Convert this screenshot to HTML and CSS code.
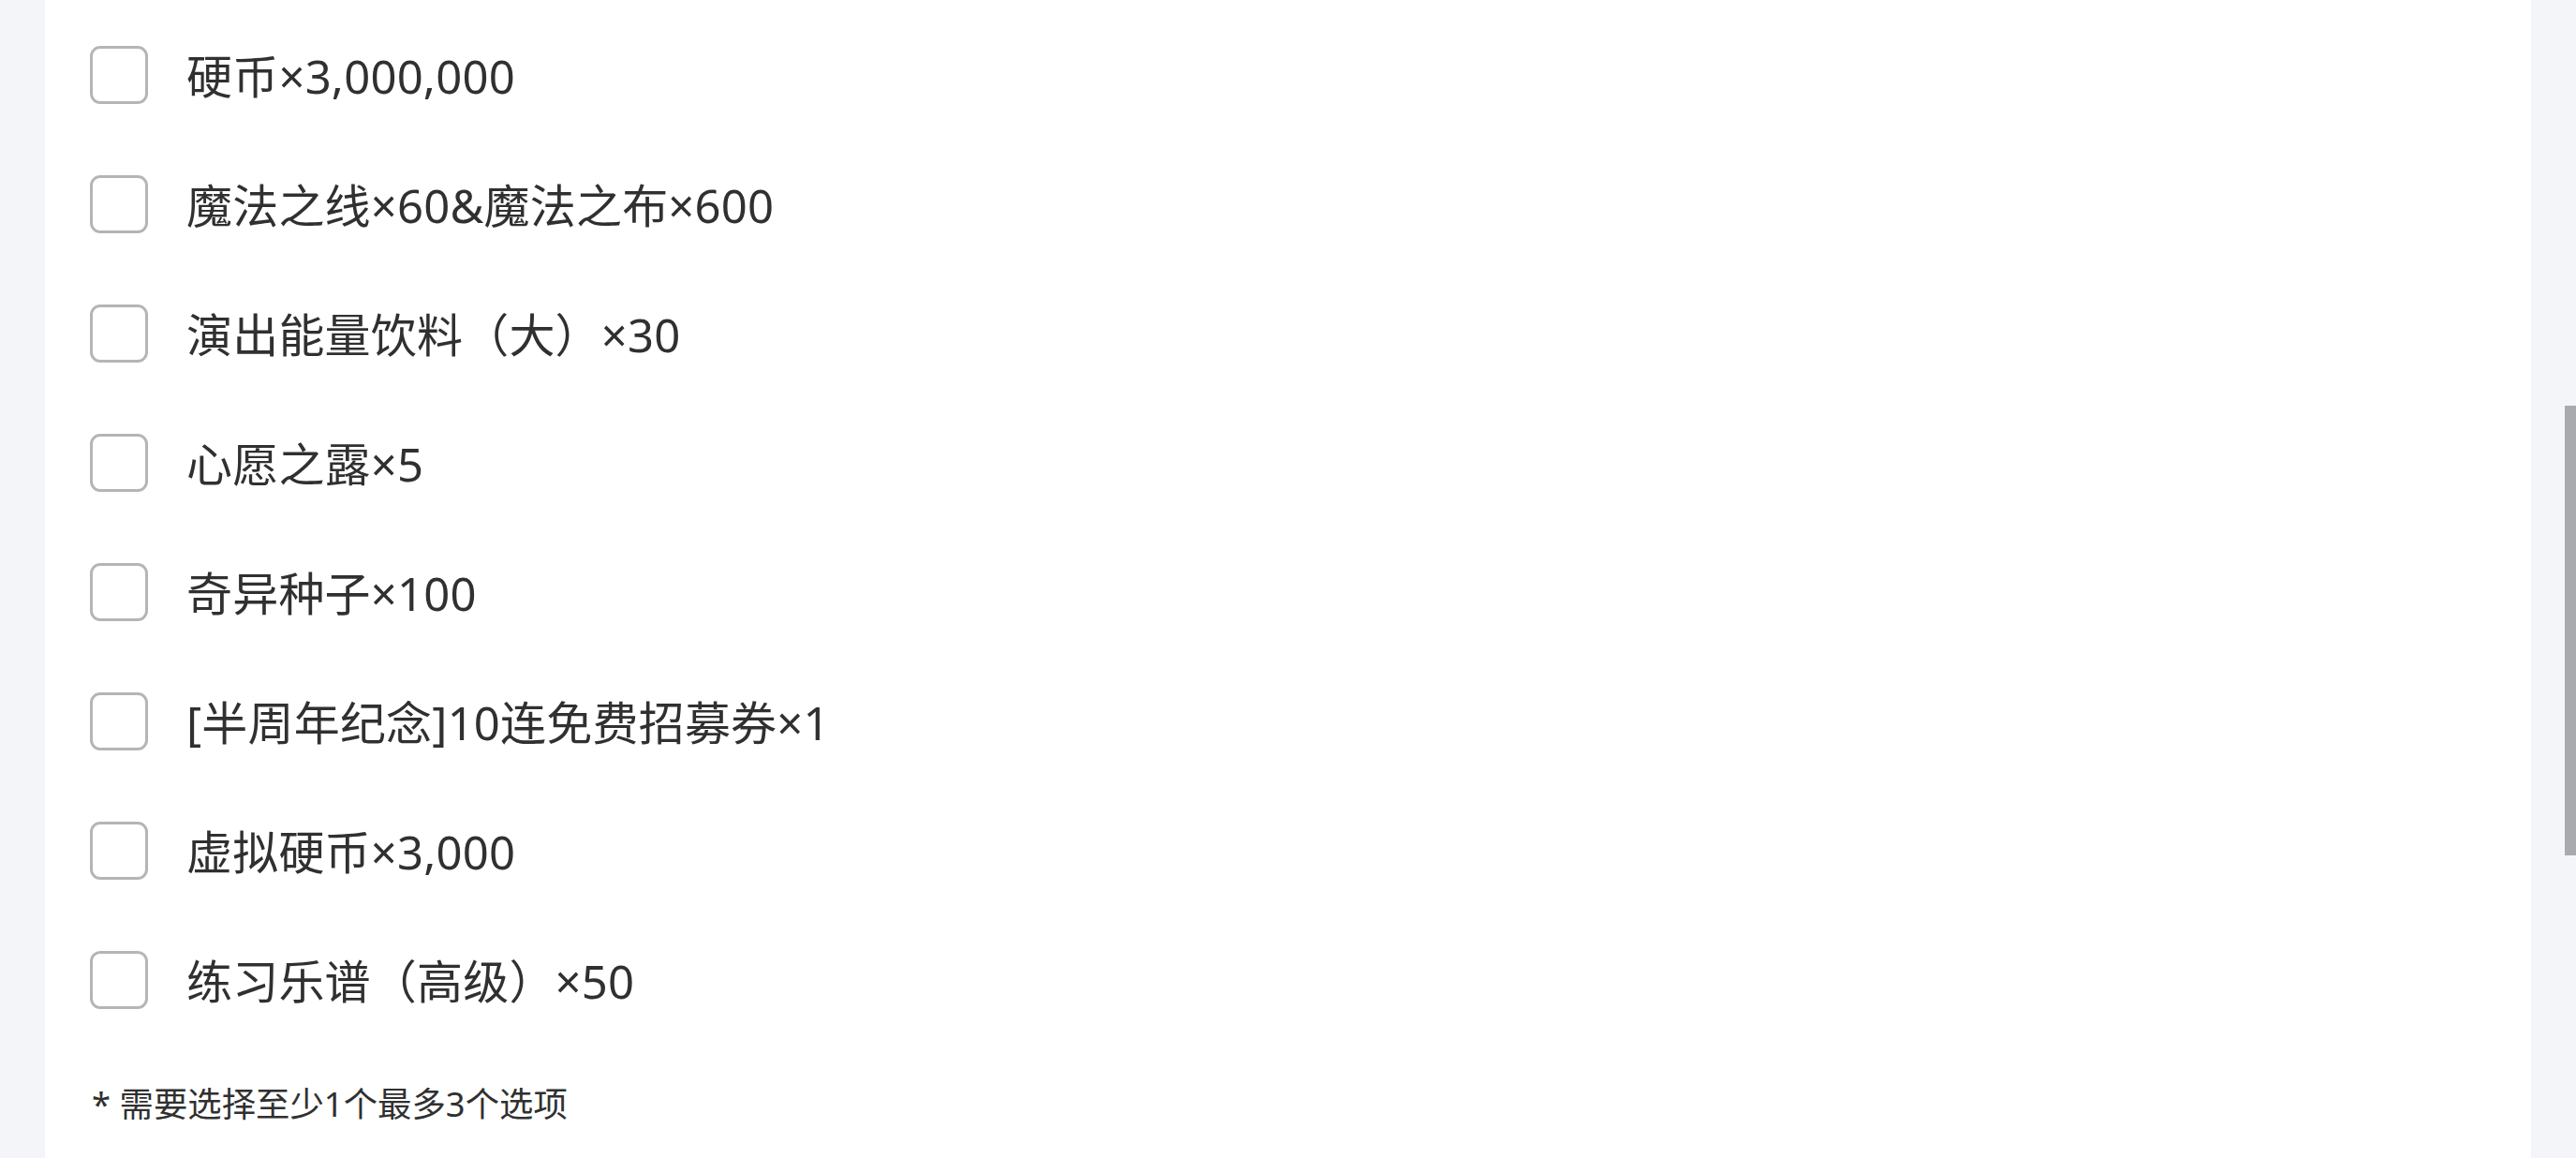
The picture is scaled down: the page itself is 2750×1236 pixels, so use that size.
FILE: index.html
```html
<!DOCTYPE html>
<html lang="zh-CN">
<head>
<meta charset="utf-8">
<title>选项</title>
<link rel="stylesheet" href="styles.css">
</head>
<body>
<div class="page">
  <div class="card">
    <ul class="options">
      <li class="option"><span class="box"></span><span class="label">硬币×3,000,000</span></li>
      <li class="option"><span class="box"></span><span class="label">魔法之线×60&amp;魔法之布×600</span></li>
      <li class="option"><span class="box"></span><span class="label">演出能量饮料（大）×30</span></li>
      <li class="option"><span class="box"></span><span class="label">心愿之露×5</span></li>
      <li class="option"><span class="box"></span><span class="label">奇异种子×100</span></li>
      <li class="option"><span class="box"></span><span class="label">[半周年纪念]10连免费招募券×1</span></li>
      <li class="option"><span class="box"></span><span class="label">虚拟硬币×3,000</span></li>
      <li class="option"><span class="box"></span><span class="label">练习乐谱（高级）×50</span></li>
    </ul>
    <p class="hint">* 需要选择至少1个最多3个选项</p>
  </div>
  <div class="scrollbar"><div class="thumb"></div></div>
</div>
</body>
</html>
```
FILE: styles.css
```css
html, body {
  margin: 0;
  padding: 0;
  height: 100%;
  overflow: hidden;
}
body {
  background: #f4f5f9;
  font-family: "Noto Sans", "Noto Sans CJK SC", sans-serif;
  color: #303030;
}
.page {
  position: relative;
  height: 1236px;
  padding: 0 48px;
}
.card {
  background: #ffffff;
  height: 100%;
  padding: 11px 48px 0 48px;
  box-sizing: border-box;
}
.options {
  list-style: none;
  margin: 0;
  padding: 0;
  display: flex;
  flex-direction: column;
}
.option {
  height: 138px;
  display: flex;
  align-items: center;
  gap: 41px;
}
.box {
  width: 62px;
  height: 62px;
  box-sizing: border-box;
  border: 3px solid #b5b5b5;
  border-radius: 11px;
  flex: none;
}
.label {
  font-size: 49px;
  line-height: 60px;
  letter-spacing: 0.2px;
  position: relative;
  top: 1px;
}
.hint {
  margin: 37px 0 0 2px;
  font-size: 36.4px;
  line-height: 52px;
}
.scrollbar {
  position: absolute;
  top: 0;
  right: 0;
  width: 12px;
  height: 100%;
}
.thumb {
  position: absolute;
  top: 433px;
  left: 0;
  width: 12px;
  height: 480px;
  background: #a9aaae;
}
```
